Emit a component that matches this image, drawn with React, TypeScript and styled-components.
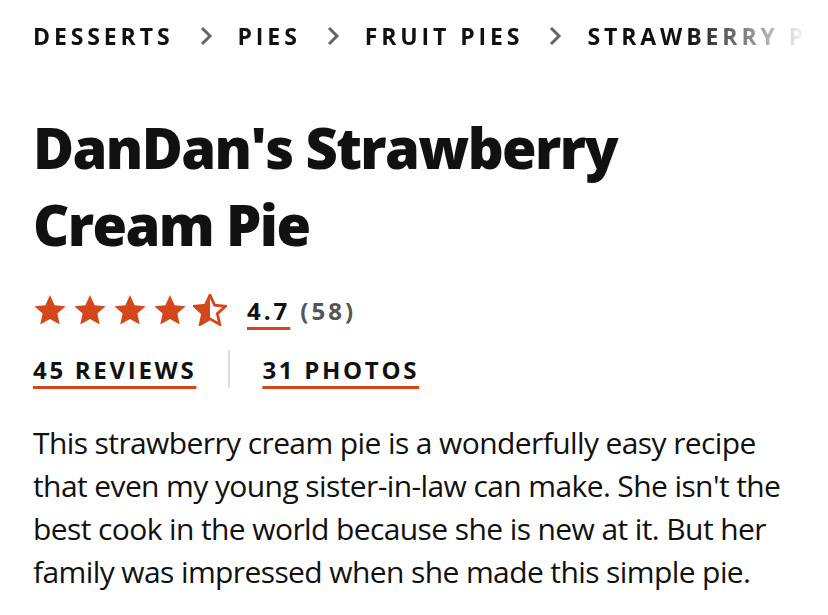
import { Fragment } from 'react';
import styled, { createGlobalStyle } from 'styled-components';

const GlobalStyle = createGlobalStyle`
	html, body {
		margin: 0;
		padding: 0;
		background: #fff;
	}
	body {
		font-family: 'Open Sans', 'Noto Sans', sans-serif;
		color: #111;
	}
`;

const ACCENT = '#d5461a';

const Page = styled.div`
	padding: 0 0 0 33px;
	width: 828px;
	box-sizing: border-box;
	overflow: hidden;
`;

const Breadcrumbs = styled.nav`
	display: flex;
	align-items: center;
	gap: 25px;
	height: 72px;
	white-space: nowrap;
	overflow: hidden;
	-webkit-mask-image: linear-gradient(to right, #000 655px, transparent 775px);
	mask-image: linear-gradient(to right, #000 655px, transparent 775px);
`;

const Crumb = styled.a`
	font-family: 'Open Sans', sans-serif;
	font-weight: 700;
	font-size: 23px;
	letter-spacing: 3.9px;
	text-transform: uppercase;
	color: #111;
	text-decoration: none;
`;

const Chevron = styled.span`
	display: flex;
	align-items: center;
	color: #666;
`;

const Title = styled.h1`
	margin: 37px 0 0;
	font-family: 'Open Sans', sans-serif;
	font-weight: 800;
	font-size: 56px;
	line-height: 77px;
	letter-spacing: -1.6px;
	color: #111;
`;

const RatingRow = styled.div`
	display: flex;
	align-items: center;
	margin-top: 27px;
	height: 40px;
`;

const Stars = styled.div`
	display: flex;
	gap: 6px;
	margin-right: 20px;
`;

const RatingValue = styled.a`
	font-weight: 700;
	font-size: 24px;
	letter-spacing: 3px;
	color: #111;
	text-decoration: underline;
	text-decoration-color: ${ACCENT};
	text-decoration-thickness: 3px;
	text-underline-offset: 7px;
`;

const RatingCount = styled.span`
	font-weight: 700;
	font-size: 24px;
	letter-spacing: 3px;
	color: #555;
	margin-left: 10px;
`;

const LinksRow = styled.div`
	display: flex;
	align-items: center;
	margin-top: 19px;
	height: 40px;
`;

const CountLink = styled.a`
	font-weight: 700;
	font-size: 24px;
	letter-spacing: 2.7px;
	text-transform: uppercase;
	color: #111;
	text-decoration: underline;
	text-decoration-color: ${ACCENT};
	text-decoration-thickness: 3px;
	text-underline-offset: 7px;
`;

const Divider = styled.span`
	width: 2px;
	height: 38px;
	background: #ddd;
	margin: 0 32px;
`;

const Description = styled.p`
	margin: 32px 0 0;
	width: 760px;
	font-family: 'Open Sans', sans-serif;
	font-size: 30px;
	line-height: 43px;
	letter-spacing: -0.6px;
	color: #111;
`;

const STAR_PATH = 'M12 0.8l3.3 7.2 7.9.8-5.9 5.3 1.7 7.8L12 17.9l-7 4 1.7-7.8L0.8 8.8l7.9-.8z';

function Star({ fill }: { fill: 'full' | 'half' }) {
	return (
		<svg width="34" height="32" viewBox="0 0 24 23">
			{fill === 'full' ? (
				<path d={STAR_PATH} fill={ACCENT} />
			) : (
				<>
					<path d={STAR_PATH} fill="none" stroke={ACCENT} strokeWidth="2" />
					<path d="M12 0.8v17.1l-7 4 1.7-7.8L0.8 8.8l7.9-.8z" fill={ACCENT} />
				</>
			)}
		</svg>
	);
}

function ChevronIcon() {
	return (
		<svg width="14" height="20" viewBox="0 0 14 20">
			<path d="M3 2l8 8-8 8" fill="none" stroke="currentColor" strokeWidth="3" />
		</svg>
	);
}

export default function App() {
	const crumbs = ['Desserts', 'Pies', 'Fruit Pies', 'Strawberry Pie Recipes'];
	return (
		<Page>
			<GlobalStyle />
			<Breadcrumbs>
				{crumbs.map((c, i) => (
					<Fragment key={c}>
						{i > 0 && (
							<Chevron>
								<ChevronIcon />
							</Chevron>
						)}
						<Crumb href="#">{c}</Crumb>
					</Fragment>
				))}
			</Breadcrumbs>
			<Title>
				DanDan's Strawberry
				<br />
				Cream Pie
			</Title>
			<RatingRow>
				<Stars>
					<Star fill="full" />
					<Star fill="full" />
					<Star fill="full" />
					<Star fill="full" />
					<Star fill="half" />
				</Stars>
				<RatingValue href="#">4.7</RatingValue>
				<RatingCount>(58)</RatingCount>
			</RatingRow>
			<LinksRow>
				<CountLink href="#">45 Reviews</CountLink>
				<Divider />
				<CountLink href="#">31 Photos</CountLink>
			</LinksRow>
			<Description>
				This strawberry cream pie is a wonderfully easy recipe that even my young sister-in-law can make. She isn't the
				best cook in the world because she is new at it. But her family was impressed when she made this simple pie.
			</Description>
		</Page>
	);
}
